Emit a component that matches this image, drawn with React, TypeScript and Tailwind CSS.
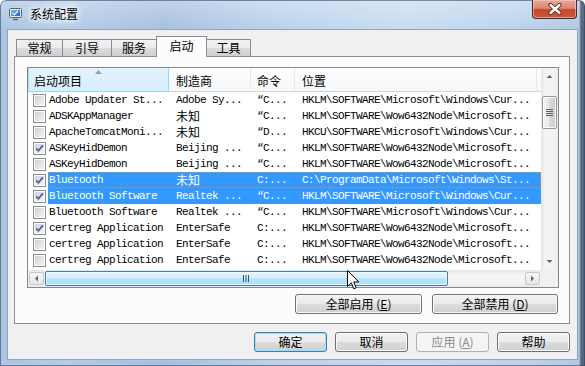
import clsx from "clsx";

type Row = {
  name: string;
  maker: string;
  cmd: string;
  loc: string;
  checked?: boolean;
  selected?: boolean;
  focus?: boolean;
};

const rows: Row[] = [
  { name: "Adobe Updater St...", maker: "Adobe Sy...", cmd: "“C...", loc: "HKLM\\SOFTWARE\\Microsoft\\Windows\\Cur..." },
  { name: "ADSKAppManager", maker: "未知", cmd: "“C...", loc: "HKLM\\SOFTWARE\\Wow6432Node\\Microsoft..." },
  { name: "ApacheTomcatMoni...", maker: "未知", cmd: "“D...", loc: "HKCU\\SOFTWARE\\Microsoft\\Windows\\Cur..." },
  { name: "ASKeyHidDemon", maker: "Beijing ...", cmd: "“C...", loc: "HKLM\\SOFTWARE\\Wow6432Node\\Microsoft...", checked: true },
  { name: "ASKeyHidDemon", maker: "Beijing ...", cmd: "“C...", loc: "HKLM\\SOFTWARE\\Wow6432Node\\Microsoft..." },
  { name: "Bluetooth", maker: "未知", cmd: "C:...", loc: "C:\\ProgramData\\Microsoft\\Windows\\St...", checked: true, selected: true, focus: true },
  { name: "Bluetooth Software", maker: "Realtek ...", cmd: "“C...", loc: "HKLM\\SOFTWARE\\Microsoft\\Windows\\Cur...", checked: true, selected: true },
  { name: "Bluetooth Software", maker: "Realtek ...", cmd: "“C...", loc: "HKLM\\SOFTWARE\\Microsoft\\Windows\\Cur..." },
  { name: "certreg Application", maker: "EnterSafe", cmd: "C:...", loc: "HKLM\\SOFTWARE\\Wow6432Node\\Microsoft...", checked: true },
  { name: "certreg Application", maker: "EnterSafe", cmd: "C:...", loc: "HKLM\\SOFTWARE\\Wow6432Node\\Microsoft..." },
  { name: "certreg Application", maker: "EnterSafe", cmd: "C:...", loc: "HKLM\\SOFTWARE\\Wow6432Node\\Microsoft..." },
];

const tabs = [
  { label: "常规", w: "w-[47px]" },
  { label: "引导", w: "w-[50px]" },
  { label: "服务", w: "w-[46px]" },
  { label: "启动", w: "w-[51px]", active: true },
  { label: "工具", w: "w-[45px]" },
];

const isCjk = (s: string) => /[\u4e00-\u9fff]/.test(s);

const AppIcon = () => (
  <svg width="13" height="13" viewBox="0 0 13 13">
    <defs>
      <linearGradient id="scr" x1="0" y1="0" x2="1" y2="1">
        <stop offset="0" stopColor="#7fc4f5" />
        <stop offset="1" stopColor="#1b5fb8" />
      </linearGradient>
    </defs>
    <rect x="0.5" y="0.5" width="12" height="9" rx="1" fill="#e4e8ee" stroke="#56667a" />
    <rect x="2" y="2" width="9" height="6" fill="url(#scr)" />
    <path d="M3.5 5.2 L5.3 6.8 L9 3" fill="none" stroke="#fff" strokeWidth="1.1" />
    <path d="M4 11.5 H9" stroke="#56667a" strokeWidth="1.6" />
  </svg>
);

const Checkbox = ({ checked }: { checked?: boolean }) => (
  <div className="relative w-[13px] h-[13px] border border-[#8e8f8f] bg-[linear-gradient(135deg,#cbced3,#f7f7f7)] shadow-[inset_0_0_0_1px_#fbfbfb]">
    {checked && (
      <svg className="absolute left-0 top-0" width="11" height="11" viewBox="0 0 11 11">
        <path d="M2.2 5.4 L4.4 7.8 L8.9 2.4" fill="none" stroke="#4a5f97" strokeWidth="1.7" />
      </svg>
    )}
  </div>
);

const Arrow = ({ dir }: { dir: "up" | "down" | "left" | "right" }) => {
  const d = {
    up: "M0.5 4 L3.5 1 L6.5 4 Z",
    down: "M0.5 1 L3.5 4 L6.5 1 Z",
    left: "M4 0.5 L1 3.5 L4 6.5 Z",
    right: "M1 0.5 L4 3.5 L1 6.5 Z",
  }[dir];
  const vertical = dir === "up" || dir === "down";
  return (
    <svg width={vertical ? 7 : 5} height={vertical ? 5 : 7} viewBox={vertical ? "0 0 7 5" : "0 0 5 7"}>
      <path d={d} fill="#5d6470" />
    </svg>
  );
};

const WinButton = ({
  children,
  width,
  primary,
  disabled,
}: {
  children: React.ReactNode;
  width: string;
  primary?: boolean;
  disabled?: boolean;
}) => (
  <div
    className={clsx(
      "h-[20px] rounded-[3px] border flex items-center justify-center text-[12px] leading-none",
      width,
      disabled
        ? "border-[#adb2b5] bg-[#f4f4f4] text-[#8a8a8a]"
        : primary
          ? "border-[#3c7fb1] bg-[linear-gradient(#f2f2f2,#ebebeb_50%,#dddddd_50%,#cfcfcf)] shadow-[inset_0_0_0_1px_#9edcfa]"
          : "border-[#707070] bg-[linear-gradient(#f2f2f2,#ebebeb_50%,#dddddd_50%,#cfcfcf)] shadow-[inset_0_0_0_1px_#fbfbfb]"
    )}
  >
    {children}
  </div>
);

const Cell = ({ text, className }: { text: string; className: string }) => (
  <div
    className={clsx(
      "h-full flex items-center overflow-hidden whitespace-pre shrink-0",
      isCjk(text)
        ? "font-['Noto_Sans_CJK_SC',sans-serif] text-[12px] leading-[16px]"
        : "font-['Liberation_Mono',monospace] text-[11px] tracking-[-0.6px] leading-[16px]",
      className
    )}
  >
    {text}
  </div>
);

const Cursor = () => (
  <svg className="absolute left-[347px] top-[270px]" width="13" height="21" viewBox="0 0 13 21">
    <path
      d="M0.5 0.5 L0.5 16.5 L4.3 12.8 L6.8 18.8 L9.2 17.8 L6.7 11.9 L11.8 11.9 Z"
      fill="#fff"
      stroke="#000"
      strokeLinejoin="round"
    />
  </svg>
);

export default function App() {
  return (
    <div className="relative w-[585px] h-[366px] overflow-hidden flex flex-col rounded-t-[6px] font-['Noto_Sans_CJK_SC',sans-serif] text-[12px] text-black shadow-[inset_0_0_0_1px_rgba(40,60,90,0.55)] bg-[linear-gradient(90deg,rgba(50,62,78,0)_579px,rgba(50,62,78,0.7)_581px),linear-gradient(180deg,rgba(255,255,255,0.3),rgba(255,255,255,0)_30px),linear-gradient(90deg,#abc5e3_0%,#b3cbe7_12%,#a6c0e0_28%,#b9d0ea_45%,#c8dcf1_70%,#bdd3ec_88%,#aec7e4_100%)]">
      {/* Title bar */}
      <div className="h-[29px] flex items-start shrink-0">
        <div className="ml-[9px] mt-[8px]">
          <AppIcon />
        </div>
        <div className="ml-[8px] mt-[6px] leading-[16px] [text-shadow:0_0_6px_#fff,0_0_8px_#fff,0_0_10px_#fff]">
          系统配置
        </div>
        <div className="ml-auto mr-[8px] w-[45px] h-[19px] rounded-b-[4px] border border-t-0 border-[#5b231a] bg-[linear-gradient(#e8a898,#d98a75_45%,#c8442b_55%,#cf5a3a)] shadow-[inset_0_0_0_1px_rgba(255,220,210,0.5)] flex items-center justify-center">
          <svg width="14" height="12" viewBox="0 0 14 12">
            <path d="M2.5 2 L11.5 10 M11.5 2 L2.5 10" stroke="#4a2520" strokeWidth="4.2" strokeLinecap="round" />
            <path d="M2.5 2 L11.5 10 M11.5 2 L2.5 10" stroke="#fff" strokeWidth="2.4" strokeLinecap="round" />
          </svg>
        </div>
      </div>

      {/* Client area */}
      <div className="mx-[7px] mb-[6px] flex-1 border border-[#8ea4c1] bg-[#f0f0f0] flex flex-col">
        {/* Tabs */}
        <div className="h-[26px] pl-[8px] flex items-end shrink-0">
          {tabs.map((t) => (
            <div
              key={t.label}
              className={clsx(
                "border border-b-0 border-[#898c95] flex justify-center -ml-px first:ml-0",
                t.w,
                t.active
                  ? "relative z-10 h-[21px] -mb-px bg-[#fcfcfc] pt-[2px]"
                  : "h-[17px] bg-[linear-gradient(#f3f3f3,#ebebeb_50%,#dddddd_50%,#cfcfcf)] pt-px"
              )}
            >
              <span className="leading-[14px] text-[12px]">{t.label}</span>
            </div>
          ))}
        </div>

        {/* Tab panel */}
        <div className="ml-[6px] w-[556px] h-[268px] border border-[#898c95] bg-[#fcfcfc] flex flex-col shrink-0">
          {/* List view */}
          <div className="ml-[12px] mt-[10px] w-[532px] h-[221px] border border-[#828790] bg-white flex">
            <div className="w-[513px] flex flex-col">
              {/* Header */}
              <div className="h-[24px] flex shrink-0">
                <div className="relative w-[141px] h-full flex items-center pl-[5px] pt-[2px] border border-t-0 border-[#96d9f9] bg-[linear-gradient(#e3f3fc,#d8eefb)]">
                  启动项目
                  <svg className="absolute left-[66px] top-[2px]" width="7" height="4" viewBox="0 0 7 4">
                    <path d="M0 4 L3.5 0 L7 4 Z" fill="#8aa2bf" />
                  </svg>
                </div>
                <div className="w-[82px] h-full flex items-center pl-[7px] pt-[2px] border-r border-b border-[#e3e8ee] border-b-[#d5d5d5] bg-[linear-gradient(#ffffff,#f5f7f9)]">
                  制造商
                </div>
                <div className="w-[44px] h-full flex items-center pl-[6px] pt-[2px] border-r border-b border-[#e3e8ee] border-b-[#d5d5d5] bg-[linear-gradient(#ffffff,#f5f7f9)]">
                  命令
                </div>
                <div className="w-[242px] h-full flex items-center pl-[7px] pt-[2px] border-r border-b border-[#e3e8ee] border-b-[#d5d5d5] bg-[linear-gradient(#ffffff,#f5f7f9)]">
                  位置
                </div>
                <div className="flex-1 h-full border-b border-[#d5d5d5] bg-[linear-gradient(#ffffff,#f5f7f9)]" />
              </div>

              {/* Rows */}
              <div className="h-[178px] overflow-hidden">
                {rows.map((r, i) => (
                  <div key={i} className="h-[16px] flex items-center">
                    <div className="w-[20px] h-full flex items-center pl-[5px] shrink-0">
                      <Checkbox checked={r.checked} />
                    </div>
                    <div
                      className={clsx(
                        "flex-1 h-full flex",
                        r.selected && "bg-[#3399ff] text-white",
                        r.focus && "outline-1 outline-dotted outline-[#d4904a] -outline-offset-1"
                      )}
                    >
                      <Cell text={r.name} className="w-[121px] pl-[1px]" />
                      <Cell text={r.maker} className="w-[82px] pl-[7px]" />
                      <Cell text={r.cmd} className="w-[44px] pl-[6px]" />
                      <Cell text={r.loc} className="flex-1 pl-[7px]" />
                    </div>
                  </div>
                ))}
              </div>

              {/* Horizontal scrollbar */}
              <div className="h-[17px] flex items-center shrink-0 bg-[linear-gradient(#e6e6e6,#f3f3f3_25%,#f3f3f3_75%,#ebebeb)]">
                <div className="ml-[1px] w-[15px] h-[13px] rounded-[2px] border border-[#c5c8cd] bg-[linear-gradient(#f6f6f6,#e6e6e6)] flex items-center justify-center">
                  <Arrow dir="left" />
                </div>
                <div className="ml-[1px] w-[403px] h-[15px] rounded-[2px] border border-[#3c7fb1] bg-[linear-gradient(#e5f4fc,#d4edfb_50%,#bde4f8_50%,#aedcf5)] shadow-[inset_0_0_0_1px_#eef8fe] flex items-center justify-center">
                  <svg width="7" height="7" viewBox="0 0 7 7">
                    <path d="M0.5 0 V7 M3 0 V7 M5.5 0 V7" stroke="#2a5a85" strokeWidth="1" />
                  </svg>
                </div>
                <div className="flex-1" />
                <div className="mr-[1px] w-[15px] h-[13px] rounded-[2px] border border-[#c5c8cd] bg-[linear-gradient(#f6f6f6,#e6e6e6)] flex items-center justify-center">
                  <Arrow dir="right" />
                </div>
              </div>
            </div>

            {/* Vertical scrollbar */}
            <div className="w-[17px] flex flex-col">
              <div className="flex-1 flex flex-col bg-[linear-gradient(90deg,#e6e6e6,#f3f3f3_25%,#f3f3f3_75%,#ebebeb)]">
                <div className="h-[17px] flex items-center justify-center shrink-0">
                  <Arrow dir="up" />
                </div>
                <div className="mt-[11px] mx-[1px] h-[33px] rounded-[2px] border border-[#979797] bg-[linear-gradient(90deg,#f3f3f3,#e9e9e9_50%,#d9d9d9_50%,#cdcdcd)] shadow-[inset_0_0_0_1px_#fbfbfb] flex items-center justify-center shrink-0">
                  <svg width="7" height="7" viewBox="0 0 7 7">
                    <path d="M0 0.5 H7 M0 2.5 H7 M0 4.5 H7 M0 6.5 H7" stroke="#5f5f5f" strokeWidth="1" />
                  </svg>
                </div>
                <div className="flex-1" />
                <div className="h-[17px] flex items-center justify-center shrink-0">
                  <Arrow dir="down" />
                </div>
              </div>
              <div className="h-[17px] bg-[#f0f0f0] shrink-0" />
            </div>
          </div>

          {/* Enable / disable buttons */}
          <div className="ml-[280px] mt-[6px] flex gap-[10px]">
            <WinButton width="w-[127px]">
              全部启用 (<span className="underline">E</span>)
            </WinButton>
            <WinButton width="w-[126px]">
              全部禁用 (<span className="underline">D</span>)
            </WinButton>
          </div>
        </div>

        {/* Dialog buttons */}
        <div className="ml-[246px] mt-[8px] flex gap-[8px]">
          <WinButton width="w-[73px]" primary>
            确定
          </WinButton>
          <WinButton width="w-[73px]">取消</WinButton>
          <WinButton width="w-[73px]" disabled>
            应用 (<span className="underline">A</span>)
          </WinButton>
          <WinButton width="w-[73px]">帮助</WinButton>
        </div>
      </div>

      <Cursor />
    </div>
  );
}
